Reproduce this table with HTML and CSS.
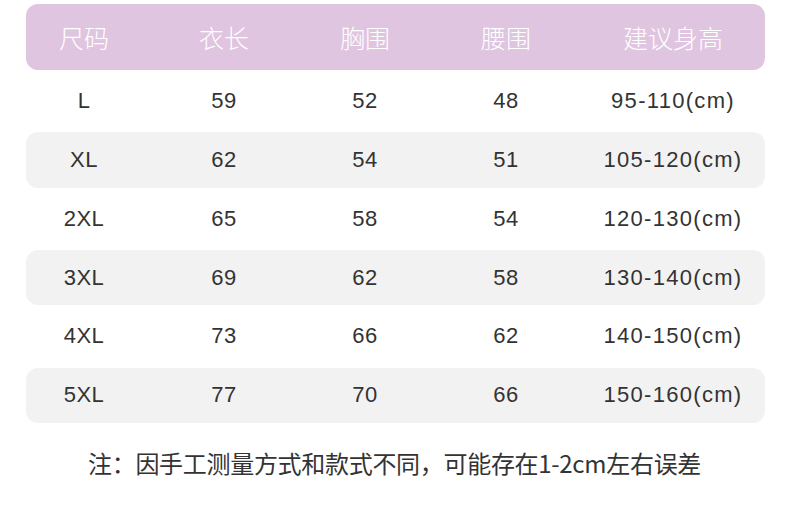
FILE: index.html
```html
<!DOCTYPE html>
<html lang="zh-CN">
<head>
<meta charset="utf-8">
<link rel="stylesheet" href="styles.css">
</head>
<body>
<div class="page">
  <div class="table">
    <div class="row head">
      <div class="c">尺码</div><div class="c">衣长</div><div class="c">胸围</div><div class="c">腰围</div><div class="c">建议身高</div>
    </div>
    <div class="row">
      <div class="c">L</div><div class="c">59</div><div class="c">52</div><div class="c">48</div><div class="c wide">95-110(cm)</div>
    </div>
    <div class="row alt">
      <div class="c">XL</div><div class="c">62</div><div class="c">54</div><div class="c">51</div><div class="c wide">105-120(cm)</div>
    </div>
    <div class="row">
      <div class="c">2XL</div><div class="c">65</div><div class="c">58</div><div class="c">54</div><div class="c wide">120-130(cm)</div>
    </div>
    <div class="row alt">
      <div class="c">3XL</div><div class="c">69</div><div class="c">62</div><div class="c">58</div><div class="c wide">130-140(cm)</div>
    </div>
    <div class="row">
      <div class="c">4XL</div><div class="c">73</div><div class="c">66</div><div class="c">62</div><div class="c wide">140-150(cm)</div>
    </div>
    <div class="row alt">
      <div class="c">5XL</div><div class="c">77</div><div class="c">70</div><div class="c">66</div><div class="c wide">150-160(cm)</div>
    </div>
  </div>
  <p class="note">注：因手工测量方式和款式不同，可能存在1-2cm左右误差</p>
</div>
</body>
</html>
```

FILE: styles.css
```css
html, body {
  margin: 0;
  padding: 0;
  background: #ffffff;
}
.page {
  width: 790px;
  height: 519px;
  padding-top: 4px;
  box-sizing: border-box;
}
.table {
  margin-left: 26px;
  width: 739px;
}
.row {
  display: grid;
  grid-template-columns: 116px 164px 118px 164px 170px;
  align-items: center;
  height: 62.4px;
  font-family: "Liberation Sans", Arial, sans-serif;
  font-size: 22px;
  color: #333333;
  letter-spacing: 0.5px;
  border-radius: 12px;
}
.row.alt {
  height: 55.2px;
  background: #f2f2f2;
}
.row.head {
  height: 66px;
  background: #e0c5e0;
  color: #ffffff;
  font-family: "Noto Sans CJK SC", sans-serif;
  font-weight: 300;
  font-size: 25px;
  letter-spacing: 0;
}
.c {
  text-align: center;
  white-space: nowrap;
}
.c.wide {
  letter-spacing: 1.3px;
}
.note {
  margin: 0;
  padding-top: 23px;
  padding-left: 88px;
  font-family: "Noto Sans CJK SC", sans-serif;
  font-size: 24px;
  letter-spacing: -0.3px;
  color: #333333;
  line-height: 34px;
}
```
